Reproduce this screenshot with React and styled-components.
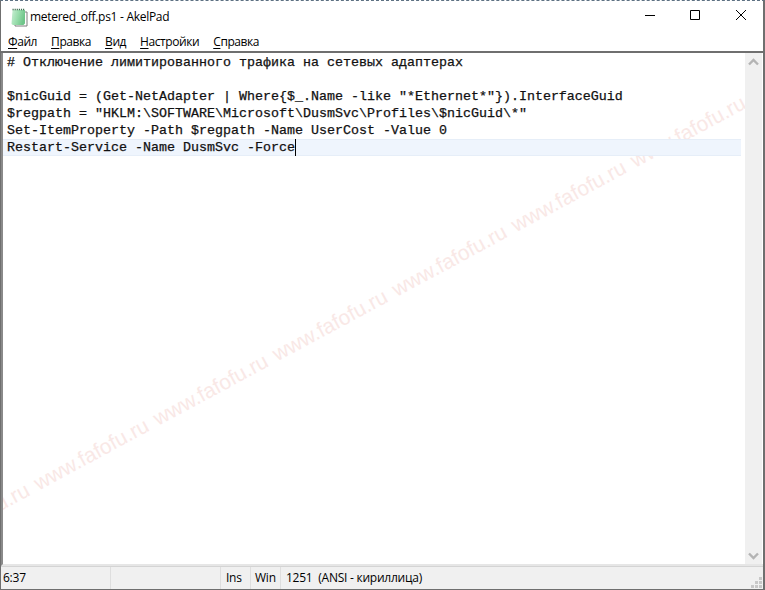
import React from "react";
import styled, { createGlobalStyle } from "styled-components";

const GlobalStyle = createGlobalStyle`
  html, body {
    margin: 0;
    padding: 0;
    background: #fff;
  }
  #root {
    width: 765px;
    height: 590px;
  }
`;

const Window = styled.div`
  box-sizing: border-box;
  width: 765px;
  height: 590px;
  display: flex;
  flex-direction: column;
  overflow: hidden;
  background: #fff;
  border: 1px solid #6f6f6f;
  border-top: 1px dashed #5d7183;
  border-right-width: 2px;
  font-family: "Open Sans", "Noto Sans", sans-serif;
  color: #000;
`;

const TitleBar = styled.div`
  flex: 0 0 31px;
  display: flex;
  align-items: center;
`;

const AppIcon = styled.svg`
  width: 18px;
  height: 20px;
  margin-left: 9px;
  flex: none;
`;

const Title = styled.div`
  flex: 1;
  margin-left: 2px;
  font-size: 12px;
  letter-spacing: -0.024em;
`;

const WinButton = styled.div`
  box-sizing: border-box;
  width: ${(p) => p.$width}px;
  height: 31px;
  padding: 9px 0 0 18px;

  svg {
    display: block;
  }
`;

const MenuBar = styled.div`
  flex: 0 0 19px;
  display: flex;
  align-items: center;
  padding-left: 7px;
  gap: 14px;
  border-bottom: 2px solid #6f6f6f;
  font-size: 12px;
`;

const MenuItem = styled.span`
  letter-spacing: -0.035em;
  u {
    text-underline-offset: 2px;
  }
`;

const Body = styled.div`
  flex: 1;
  min-height: 0;
  display: flex;
  border-left: 2px solid #8a8a8a;
  border-bottom: 2px solid #e6e6e6;
`;

const Editor = styled.div`
  position: relative;
  flex: 1;
  overflow: hidden;
  padding-top: 1px;
`;

const Watermark = styled.div`
  position: absolute;
  left: -87px;
  top: 484px;
  white-space: nowrap;
  transform: rotate(-28.4deg);
  transform-origin: 0 50%;
  font-family: "Liberation Sans", Arial, sans-serif;
  font-size: 21px;
  word-spacing: 2.6px;
  color: #f9e8e6;
`;

const Line = styled.div`
  position: relative;
  box-sizing: border-box;
  height: 17px;
  margin-right: 4px;
  padding-left: 4px;
  font-family: "Liberation Mono", "Courier New", monospace;
  font-size: 13.33px;
  line-height: 17px;
  white-space: pre;
  color: #111;
  -webkit-text-stroke: 0.25px #111;
  background: ${(p) => (p.$active ? "#eff5fd" : "transparent")};
  box-shadow: ${(p) =>
    p.$active ? "inset 0 1px 0 #e6eef8, inset 0 -1px 0 #e6eef8" : "none"};
`;

const Caret = styled.span`
  display: inline-block;
  width: 1px;
  height: 17px;
  vertical-align: top;
  background: #000;
`;

const ScrollBar = styled.div`
  flex: 0 0 17px;
  display: flex;
  flex-direction: column;
  justify-content: space-between;
  background: #f0f0f0;
  margin-right: 1px;
`;

const ScrollArrow = styled.div`
  height: 17px;
  display: flex;
  align-items: center;
  justify-content: center;
`;

const StatusBar = styled.div`
  position: relative;
  flex: 0 0 22px;
  display: flex;
  background: #f0f0f0;
  border-top: 1px solid #d4d4d4;
  font-size: 12px;
`;

const StatusCell = styled.div`
  box-sizing: border-box;
  width: ${(p) => (p.$width ? `${p.$width}px` : "auto")};
  flex: ${(p) => (p.$width ? "none" : 1)};
  padding-left: ${(p) => p.$pad || 2}px;
  line-height: 21px;
  letter-spacing: -0.02em;
  white-space: nowrap;
  border-right: ${(p) => (p.$last ? "none" : "1px solid #dedede")};
`;

const Grip = styled.svg`
  position: absolute;
  right: 1px;
  bottom: 1px;
  width: 11px;
  height: 11px;
`;

const lines = [
  "# Отключение лимитированного трафика на сетевых адаптерах",
  "",
  '$nicGuid = (Get-NetAdapter | Where{$_.Name -like "*Ethernet*"}).InterfaceGuid',
  '$regpath = "HKLM:\\SOFTWARE\\Microsoft\\DusmSvc\\Profiles\\$nicGuid\\*"',
  "Set-ItemProperty -Path $regpath -Name UserCost -Value 0",
];

const menu = [
  ["Ф", "айл"],
  ["П", "равка"],
  ["В", "ид"],
  ["Н", "астройки"],
  ["С", "правка"],
];

const Chevron = ({ down }) => (
  <svg width="11" height="8" viewBox="0 0 11 8">
    <path
      d={down ? "M1 1.5l4.5 4.5 4.5-4.5" : "M1 6.5l4.5-4.5 4.5 4.5"}
      fill="none"
      stroke="#b4b4b4"
      strokeWidth="2.4"
    />
  </svg>
);

const App = () => (
  <Window>
    <GlobalStyle />
    <TitleBar>
      <AppIcon viewBox="0 0 18 20">
        <defs>
          <linearGradient id="pad" x1="0" y1="0" x2="1" y2="0.3">
            <stop offset="0" stopColor="#c9efd4" />
            <stop offset="0.55" stopColor="#97dcab" />
            <stop offset="1" stopColor="#6fc58a" />
          </linearGradient>
        </defs>
        <path d="M5 5h12v14H5z" fill="#fff" stroke="#7d7d7d" strokeWidth="1" />
        <path d="M2.5 3h12.5v13.5l-1.5 1.5H3l-1.5-1z" fill="url(#pad)" />
        <path
          d="M2.5 2.5h12.5"
          stroke="#3f6f52"
          strokeWidth="1.6"
          strokeDasharray="1.2 0.9"
        />
      </AppIcon>
      <Title>metered_off.ps1 - AkelPad</Title>
      <WinButton $width={45}>
        <svg width="10" height="10" viewBox="0 0 10 10">
          <path d="M0 5.5h10" stroke="#000" />
        </svg>
      </WinButton>
      <WinButton $width={46}>
        <svg width="10" height="10" viewBox="0 0 10 10">
          <path d="M.5.5h9v9h-9z" fill="none" stroke="#000" />
        </svg>
      </WinButton>
      <WinButton $width={45}>
        <svg width="10" height="10" viewBox="0 0 10 10">
          <path d="M0 0l10 10M10 0L0 10" stroke="#000" />
        </svg>
      </WinButton>
    </TitleBar>
    <MenuBar>
      {menu.map(([key, rest]) => (
        <MenuItem key={key + rest}>
          <u>{key}</u>
          {rest}
        </MenuItem>
      ))}
    </MenuBar>
    <Body>
      <Editor>
        <Watermark>{"www.fafofu.ru ".repeat(7)}</Watermark>
        {lines.map((text, i) => (
          <Line key={i}>{text}</Line>
        ))}
        <Line $active>
          Restart-Service -Name DusmSvc -Force
          <Caret />
        </Line>
      </Editor>
      <ScrollBar>
        <ScrollArrow>
          <Chevron />
        </ScrollArrow>
        <ScrollArrow>
          <Chevron down />
        </ScrollArrow>
      </ScrollBar>
    </Body>
    <StatusBar>
      <StatusCell $width={110}>6:37</StatusCell>
      <StatusCell $width={110} />
      <StatusCell $width={30} $pad={5}>
        Ins
      </StatusCell>
      <StatusCell $width={30} $pad={4}>
        Win
      </StatusCell>
      <StatusCell $pad={5} $last>
        1251&nbsp; (ANSI - кириллица)
      </StatusCell>
      <Grip viewBox="0 0 11 11">
        <path
          d="M8 0h3v3H8zM4 4h3v3H4zM8 4h3v3H8zM0 8h3v3H0zM4 8h3v3H4zM8 8h3v3H8z"
          fill="#c8c8c8"
        />
      </Grip>
    </StatusBar>
  </Window>
);

export default App;
